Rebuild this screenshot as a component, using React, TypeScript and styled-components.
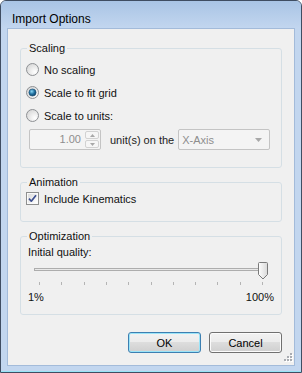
import React from 'react';
import styled, { createGlobalStyle } from 'styled-components';

const GlobalStyle = createGlobalStyle`
  html, body {
    margin: 0;
    padding: 0;
    background: #ffffff;
  }
  body {
    font-family: "Liberation Sans", Arial, sans-serif;
    font-size: 11px;
    color: #111111;
  }
  * {
    box-sizing: border-box;
  }
`;

const Window = styled.div`
  width: 302px;
  height: 373px;
  border: 1px solid #3f4d62;
  border-radius: 6px 6px 0 0;
  background: #c2d6ef;
  display: flex;
  flex-direction: column;
  overflow: hidden;
`;

const TitleBar = styled.div`
  height: 28px;
  padding: 10px 0 0 11px;
  font-size: 12px;
  line-height: 16px;
  color: #000000;
  background: linear-gradient(to bottom, #a9c4e5, #c2d6ef);
`;

const Frame = styled.div`
  flex: 1;
  display: flex;
  padding: 0 6px 6px;
  box-shadow: inset 0 -1px 0 #97e3f5;
`;

const Client = styled.div`
  position: relative;
  flex: 1;
  display: flex;
  flex-direction: column;
  padding: 12px;
  border: 1px solid #a3bbda;
  background: #f0f0f0;
`;

const Group = styled.fieldset<{ $top: number; $bottom: number }>`
  margin: 0;
  padding: ${(p) => p.$top}px 5px ${(p) => p.$bottom}px;
  border: 1px solid #d5dfe5;
  border-radius: 3px;
  min-inline-size: 0;

  & + & {
    margin-top: 7px;
  }
`;

const Legend = styled.legend`
  margin-left: 1px;
  padding: 0 2px;
  line-height: 14px;
`;

const OptionRow = styled.div`
  display: flex;
  align-items: center;
  gap: 5px;
  height: ${(p: { $h?: number }) => p.$h ?? 23}px;
`;

const UnitsRow = styled.div`
  display: flex;
  align-items: center;
  height: 21px;
  margin-top: 2px;
  padding-left: 3px;
`;

const SpinBox = styled.div`
  display: flex;
  width: 72px;
  height: 21px;
  border: 1px solid #c4c4c4;
  border-radius: 2px;
  background: #f4f4f4;
`;

const SpinValue = styled.div`
  flex: 1;
  padding-right: 3px;
  text-align: right;
  line-height: 19px;
  color: #8e8e8e;
`;

const SpinButtons = styled.div`
  display: flex;
  flex-direction: column;
  width: 16px;
  padding: 1px;
  gap: 1px;
`;

const SpinButton = styled.div`
  flex: 1;
  display: flex;
  align-items: center;
  justify-content: center;
  border: 1px solid #d2d2d2;
  border-radius: 2px;
  background: #f6f6f6;
`;

const UnitsLabel = styled.span`
  margin-left: 9px;
  color: #222222;
`;

const Combo = styled.div`
  display: flex;
  align-items: center;
  justify-content: space-between;
  width: 92px;
  height: 21px;
  margin-left: 4px;
  padding: 0 7px 0 3px;
  border: 1px solid #c4c4c4;
  border-radius: 2px;
  background: #f4f4f4;
  color: #8e8e8e;
`;

const FieldLabel = styled.div`
  margin-left: 2px;
  line-height: 15px;
`;

const SliderBox = styled.svg`
  display: block;
  margin-left: 2px;
`;

const SliderLabels = styled.div`
  display: flex;
  justify-content: space-between;
  margin: 3px 2px 0;
  line-height: 14px;
`;

const ButtonRow = styled.div`
  display: flex;
  justify-content: flex-end;
  gap: 8px;
  margin-top: 17px;
`;

const Button = styled.button<{ $default?: boolean }>`
  width: 73px;
  height: 21px;
  padding: 0;
  font: inherit;
  color: #000000;
  border: 1px solid ${(p) => (p.$default ? '#3c7fb1' : '#707070')};
  border-radius: 3px;
  background: linear-gradient(to bottom, #f2f2f2 0%, #ebebeb 50%, #dddddd 50%, #cfcfcf 100%);
  box-shadow: inset 0 0 0 1px ${(p) => (p.$default ? '#9be4f8' : '#fbfbfb')};
`;

const Grip = styled.svg`
  position: absolute;
  right: 1px;
  bottom: 1px;
`;

const RadioIcon = ({ checked, id }: { checked?: boolean; id: string }) => (
  <svg width="13" height="13" viewBox="0 0 13 13">
    <defs>
      <radialGradient id={`rb-${id}`} cx="0.7" cy="0.7" r="0.8">
        <stop offset="0" stopColor="#ffffff" />
        <stop offset="1" stopColor="#d6d6d6" />
      </radialGradient>
      <radialGradient id={`rd-${id}`} cx="0.4" cy="0.35" r="0.7">
        <stop offset="0" stopColor="#8ad7f5" />
        <stop offset="0.55" stopColor="#1f6f9f" />
        <stop offset="1" stopColor="#0e3f63" />
      </radialGradient>
    </defs>
    <circle cx="6.5" cy="6.5" r="6" fill={`url(#rb-${id})`} stroke="#8e9194" />
    {checked && <circle cx="6.5" cy="6.5" r="3.6" fill={`url(#rd-${id})`} stroke="#1b4d72" strokeWidth="0.6" />}
  </svg>
);

const CheckIcon = () => (
  <svg width="13" height="13" viewBox="0 0 13 13">
    <defs>
      <linearGradient id="cbg" x1="0" y1="0" x2="1" y2="1">
        <stop offset="0" stopColor="#dcdcdc" />
        <stop offset="1" stopColor="#ffffff" />
      </linearGradient>
    </defs>
    <rect x="0.5" y="0.5" width="12" height="12" fill="#fafafa" stroke="#8e8f8f" />
    <rect x="2" y="2" width="9" height="9" fill="url(#cbg)" />
    <path d="M3 6.6 L5.3 9.2 L10 3.2" stroke="#3d4f8f" strokeWidth="1.7" fill="none" strokeLinejoin="round" />
  </svg>
);

const SmallArrow = ({ up }: { up?: boolean }) => (
  <svg width="5" height="3" viewBox="0 0 5 3">
    <path d={up ? 'M0 3 L2.5 0 L5 3 Z' : 'M0 0 L2.5 3 L5 0 Z'} fill="#a8a8a8" />
  </svg>
);

const ticks = Array.from({ length: 11 }, (_, i) => 11 + i * 22.3);

const Slider = () => (
  <SliderBox width="246" height="27" viewBox="0 0 246 27">
    <defs>
      <linearGradient id="thumb" x1="0" y1="0" x2="1" y2="0">
        <stop offset="0" stopColor="#fefefe" />
        <stop offset="1" stopColor="#d9d9d9" />
      </linearGradient>
    </defs>
    <rect x="6.5" y="8.5" width="233" height="2" fill="#e9e9e9" stroke="#adadad" />
    {ticks.map((x) => (
      <rect key={x} x={Math.round(x)} y="22" width="1" height="3" fill="#b4b4b4" />
    ))}
    <path
      d="M230.5 3.5 Q230.5 2.5 231.5 2.5 H238.5 Q239.5 2.5 239.5 3.5 V14.5 L235 19 L230.5 14.5 Z"
      fill="url(#thumb)"
      stroke="#7a7a7a"
    />
  </SliderBox>
);

const SizeGrip = () => (
  <Grip width="11" height="11" viewBox="0 0 11 11">
    {[
      [8, 0],
      [5, 3],
      [8, 3],
      [2, 6],
      [5, 6],
      [8, 6],
    ].map(([x, y]) => (
      <g key={`${x}-${y}`}>
        <rect x={x + 1} y={y + 1} width="2" height="2" fill="#ffffff" />
        <rect x={x} y={y} width="2" height="2" fill="#a9acb2" />
      </g>
    ))}
  </Grip>
);

const App = () => {
  return (
    <>
      <GlobalStyle />
      <Window>
        <TitleBar>Import Options</TitleBar>
        <Frame>
          <Client>
            {/* Scaling */}
            <Group $top={3} $bottom={17}>
              <Legend>Scaling</Legend>
              <OptionRow>
                <RadioIcon id="none" />
                <span>No scaling</span>
              </OptionRow>
              <OptionRow>
                <RadioIcon id="fit" checked />
                <span>Scale to fit grid</span>
              </OptionRow>
              <OptionRow>
                <RadioIcon id="units" />
                <span>Scale to units:</span>
              </OptionRow>
              <UnitsRow>
                <SpinBox>
                  <SpinValue>1.00</SpinValue>
                  <SpinButtons>
                    <SpinButton>
                      <SmallArrow up />
                    </SpinButton>
                    <SpinButton>
                      <SmallArrow />
                    </SpinButton>
                  </SpinButtons>
                </SpinBox>
                <UnitsLabel>unit(s) on the</UnitsLabel>
                <Combo>
                  <span>X-Axis</span>
                  <svg width="7" height="4" viewBox="0 0 7 4">
                    <path d="M0 0 L3.5 4 L7 0 Z" fill="#a8a8a8" />
                  </svg>
                </Combo>
              </UnitsRow>
            </Group>

            {/* Animation */}
            <Group $top={1} $bottom={14}>
              <Legend>Animation</Legend>
              <OptionRow $h={17}>
                <CheckIcon />
                <span>Include Kinematics</span>
              </OptionRow>
            </Group>

            {/* Optimization */}
            <Group $top={2} $bottom={10}>
              <Legend>Optimization</Legend>
              <FieldLabel>Initial quality:</FieldLabel>
              <Slider />
              <SliderLabels>
                <span>1%</span>
                <span>100%</span>
              </SliderLabels>
            </Group>

            <ButtonRow>
              <Button $default>OK</Button>
              <Button>Cancel</Button>
            </ButtonRow>
            <SizeGrip />
          </Client>
        </Frame>
      </Window>
    </>
  );
};

export default App;
